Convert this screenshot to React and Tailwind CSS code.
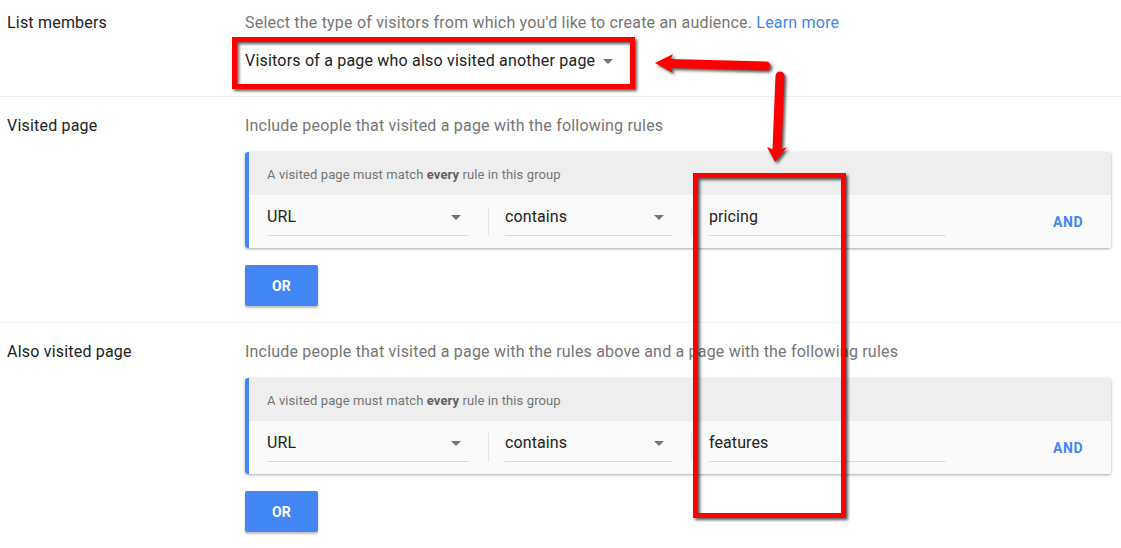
function Caret() {
    return (
        <svg viewBox="0 0 10 5" className="w-[10px] h-[5px] shrink-0">
            <path d="M0 0h10L5 5z" fill="#757575" />
        </svg>
    );
}

function Field({ value, width, caret = true }) {
    return (
        <div className={`flex items-center justify-between border-b border-[#dcdcdc] pt-[10px] pb-[6px] pr-[8px] ${width}`}>
            <span className="text-base leading-6 text-[#212121] tracking-[0.1px]">{value}</span>
            {caret && <Caret />}
        </div>
    );
}

function RuleGroup({ match }) {
    return (
        <div className="mt-[14px] w-[866px] rounded-[3px] border-l-4 border-[#4285f4] shadow-[0_1px_3px_rgba(0,0,0,0.35)] overflow-hidden">
            <div className="bg-[#eeeeee] pl-[18px] pt-[14px] pb-[12px] text-[13px] leading-[17px] tracking-[0.1px] text-[#757575]">
                A visited page must match <b className="font-bold text-[#616161]">every</b> rule in this group
            </div>
            <div className="flex items-center bg-[#fafafa] pl-[18px] pr-[28px] pb-[12px]">
                <Field value="URL" width="w-[202px]" />
                <div className="ml-[19px] mr-[16px] mt-[11px] w-px h-[29px] bg-[#e4e4e4]" />
                <Field value="contains" width="w-[167px]" />
                <div className="ml-[19px] mr-[17px] mt-[11px] w-px h-[29px] bg-[#e4e4e4]" />
                <Field value={match} width="w-[237px]" caret={false} />
                <div className="flex-1" />
                <span className="mt-[12px] text-sm font-bold text-[#4285f4] tracking-[0.5px]">AND</span>
            </div>
        </div>
    );
}

function OrButton() {
    return (
        <button className="mt-[17px] w-[73px] h-[41px] rounded-[2px] bg-[#4285f4] text-white text-sm font-bold tracking-[0.3px] shadow-[0_2px_2px_rgba(0,0,0,0.25)]">
            OR
        </button>
    );
}

function Section({ label, children, className }) {
    return (
        <section className={`flex border-b border-[#eeeeee] ${className}`}>
            <div className="w-[245px] shrink-0 pl-[7px] text-base leading-6 tracking-[0.2px] text-[#212121]">{label}</div>
            <div className="flex-1 pr-[10px]">{children}</div>
        </section>
    );
}

export default function App() {
    return (
        <div className="relative w-[1121px] h-[548px] overflow-hidden bg-white font-['Roboto',sans-serif]">
            <Section label="List members" className="pt-[11px] pb-[10px]">
                <p className="text-base leading-6 tracking-[0.2px] text-[#757575]">
                    Select the type of visitors from which you'd like to create an audience.{" "}
                    <a className="text-[#4285f4]">Learn more</a>
                </p>
                <div className="mt-[14px] w-[376px] flex items-center justify-between border-b border-[#dcdcdc] pb-[12px] pr-[8px]">
                    <span className="text-base leading-6 tracking-[0.2px] text-[#212121]">Visitors of a page who also visited another page</span>
                    <Caret />
                </div>
            </Section>

            <Section label="Visited page" className="pt-[17px] pb-[16px]">
                <p className="text-base leading-6 tracking-[0.2px] text-[#757575]">Include people that visited a page with the following rules</p>
                <RuleGroup match="pricing" />
                <OrButton />
            </Section>

            <Section label="Also visited page" className="pt-[17px] pb-[16px] border-b-0">
                <p className="text-base leading-6 tracking-[0.2px] text-[#757575]">
                    Include people that visited a page with the rules above and a page with the following rules
                </p>
                <RuleGroup match="features" />
                <OrButton />
            </Section>

            {/* annotation overlay */}
            <div className="absolute left-[232px] top-[37px] w-[403px] h-[52px] border-[5px] border-[#ff0000] [filter:drop-shadow(2px_2px_1.5px_rgba(0,0,0,0.65))] pointer-events-none" />
            <div className="absolute left-[693px] top-[173px] w-[153px] h-[345px] border-[5px] border-[#ff0000] [filter:drop-shadow(2px_2px_1.5px_rgba(0,0,0,0.65))] pointer-events-none" />
            <svg className="absolute inset-0 w-[1121px] h-[548px] pointer-events-none [filter:drop-shadow(2px_2px_1.5px_rgba(0,0,0,0.65))]" viewBox="0 0 1121 548">
                <line x1="766" y1="66" x2="670" y2="63.5" stroke="#ff0000" strokeWidth="9" strokeLinecap="round" />
                <path d="M655 63 L673 54 L669 63.5 L673 73 Z" fill="#ff0000" />
                <line x1="780" y1="76" x2="777" y2="150" stroke="#ff0000" strokeWidth="9" strokeLinecap="round" />
                <path d="M767 147 L777 151 L787 147 L775 162 Z" fill="#ff0000" />
            </svg>
        </div>
    );
}
